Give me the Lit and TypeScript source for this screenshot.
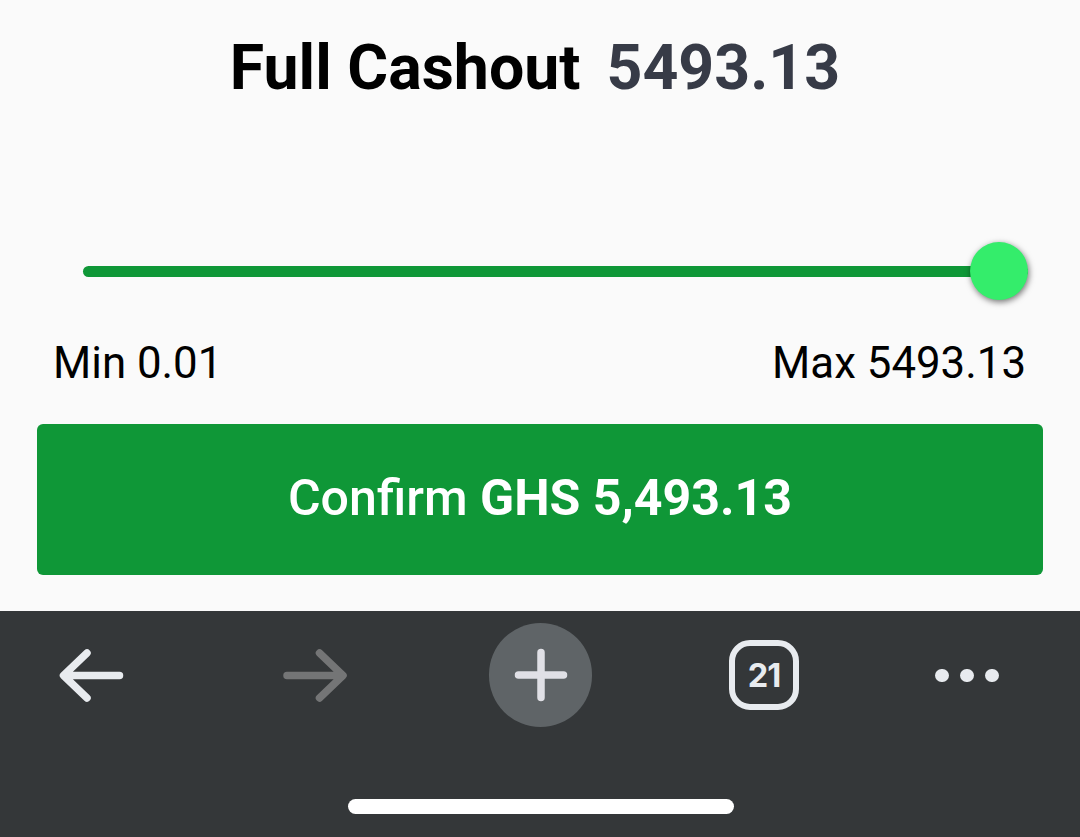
import { LitElement, html, css } from "lit";
import { customElement, property } from "lit/decorators.js";

@customElement("cashout-slider")
class CashoutSlider extends LitElement {
  @property({ type: Number }) min = 0;
  @property({ type: Number }) max = 100;
  @property({ type: Number }) value = 0;

  static styles = css`
    :host {
      display: block;
    }

    .slider {
      display: flex;
      align-items: center;
      height: 58px;
      margin: 0 15.5px 0 45.5px;
    }

    .fill {
      height: 11px;
      margin-right: -58px;
      border-radius: 6px;
      background: #0f9737;
    }

    .thumb {
      position: relative;
      flex: none;
      width: 58px;
      height: 58px;
      border-radius: 50%;
      background: #34ed6b;
      box-shadow: 1px 2px 6px rgba(0, 0, 0, 0.55);
    }

    .labels {
      display: flex;
      justify-content: space-between;
      margin-top: 37px;
      padding: 0 17px 0 16px;
      font-size: 43.8px;
      line-height: 52px;
      color: #000;
    }
  `;

  render() {
    const percent = ((this.value - this.min) / (this.max - this.min)) * 100;
    return html`
      <div class="slider">
        <div class="fill" style="width: ${percent}%"></div>
        <div class="thumb"></div>
      </div>
      <div class="labels">
        <span>Min ${this.min}</span>
        <span>Max ${this.max}</span>
      </div>
    `;
  }
}

@customElement("browser-bar")
class BrowserBar extends LitElement {
  @property({ type: Number }) tabs = 1;

  static styles = css`
    :host {
      display: flex;
      flex-direction: column;
      align-items: center;
      background: #343739;
    }

    .actions {
      display: grid;
      grid-template-columns: 182px 265px 187px 260px 146px;
      align-self: flex-start;
      align-items: center;
      justify-items: center;
      height: 104px;
      margin-top: 12px;
    }

    svg {
      display: block;
      fill: none;
      stroke: currentColor;
      stroke-linecap: round;
      stroke-linejoin: round;
    }

    .back {
      color: #e8ebef;
    }

    .forward {
      color: #747576;
    }

    .add {
      display: grid;
      place-items: center;
      width: 103.5px;
      height: 103.5px;
      border-radius: 50%;
      background: #5f6467;
      color: #e0e0e6;
    }

    .tabs {
      display: grid;
      place-items: center;
      box-sizing: border-box;
      width: 70px;
      height: 70px;
      padding-top: 3px;
      border: 6px solid #e8ebef;
      border-radius: 21px;
      color: #e8ebef;
      font: 700 32.5px/1 Inter, sans-serif;
      letter-spacing: -1px;
    }

    .more {
      display: flex;
      gap: 11.5px;
      margin-top: 1px;
    }

    .dot {
      width: 13.7px;
      height: 13.7px;
      border-radius: 50%;
      background: #e8ebef;
    }

    .home {
      width: 386px;
      height: 14.5px;
      margin: 72px 0 0 1px;
      border-radius: 8px;
      background: #fff;
    }
  `;

  render() {
    return html`
      <div class="actions">
        <svg class="back" width="66" height="56" viewBox="0 0 66 56" stroke-width="7.5">
          <path d="M61.5 28.5H6.5M29 6L5.5 28.5L29 51" />
        </svg>
        <svg class="forward" width="66" height="56" viewBox="0 0 66 56" stroke-width="7.5">
          <path d="M5 28.5H60.5M37.5 6L61 28.5L37.5 51" />
        </svg>
        <div class="add">
          <svg width="54" height="54" viewBox="0 0 54 54" stroke-width="7.5">
            <path d="M27 4.5V49.5M4.5 27H49.5" />
          </svg>
        </div>
        <div class="tabs">${this.tabs}</div>
        <div class="more">
          <span class="dot"></span>
          <span class="dot"></span>
          <span class="dot"></span>
        </div>
      </div>
      <div class="home"></div>
    `;
  }
}

@customElement("app-root")
class AppRoot extends LitElement {
  @property({ type: Number }) amount = 5493.13;

  static styles = css`
    :host {
      display: flex;
      flex-direction: column;
      height: 837px;
      overflow: hidden;
      background: #fafafa;
      font-family: Roboto, "Liberation Sans", sans-serif;
    }

    main {
      box-sizing: border-box;
      height: 611px;
      padding: 28px 37px 0;
    }

    h1 {
      display: flex;
      justify-content: center;
      gap: 26px;
      margin: 0 10px 134px 0;
      font-size: 62.6px;
      font-weight: 700;
      line-height: 80px;
      color: #000;
    }

    .amount {
      color: #373b47;
    }

    .confirm {
      display: block;
      width: 100%;
      height: 151px;
      margin-top: 35px;
      padding: 0 0 2px;
      border: none;
      border-radius: 6px;
      background: #0f9737;
      color: #fff;
      font: 500 50.1px/1.2 Roboto, "Liberation Sans", sans-serif;
    }

    .confirm b {
      font-weight: 700;
    }

    browser-bar {
      flex: 1;
    }
  `;

  render() {
    const total = this.amount.toLocaleString("en-US");
    return html`
      <main>
        <h1><span>Full Cashout</span><span class="amount">${this.amount}</span></h1>
        <cashout-slider .min=${0.01} .max=${this.amount} .value=${this.amount}></cashout-slider>
        <button class="confirm">Confirm <b>GHS ${total}</b></button>
      </main>
      <browser-bar .tabs=${21}></browser-bar>
    `;
  }
}
